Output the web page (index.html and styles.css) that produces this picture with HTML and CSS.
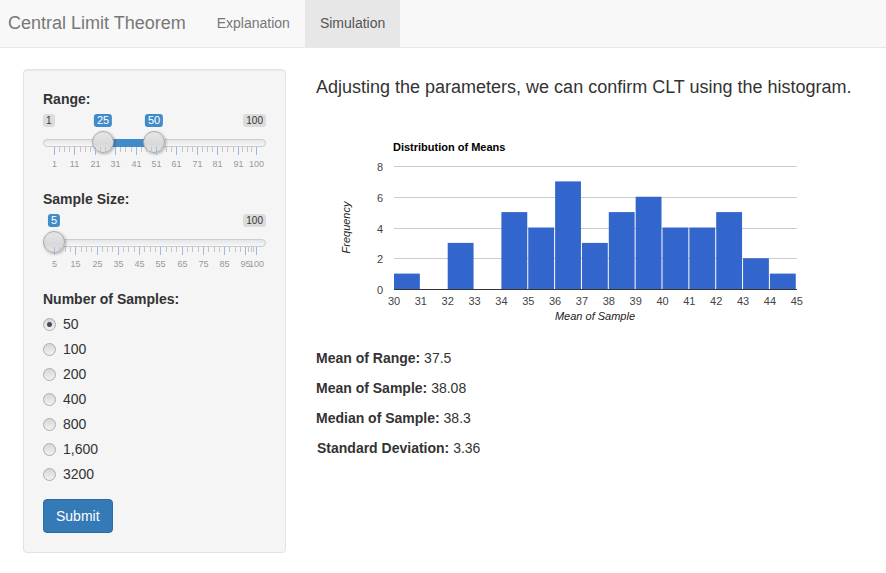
FILE: index.html
```html
<!DOCTYPE html>
<html lang="en">
<head>
<meta charset="utf-8">
<title>Central Limit Theorem</title>
<link rel="stylesheet" href="styles.css">
</head>
<body>
<nav class="navbar">
  <span class="brand">Central Limit Theorem</span>
  <ul class="nav">
    <li><a>Explanation</a></li>
    <li class="active"><a>Simulation</a></li>
  </ul>
</nav>
<div class="content">
  <aside class="well">
    <div class="form-group">
      <label class="control-label">Range:</label>
      <div class="irs">
        <span class="irs-line"></span>
        <span class="irs-bar" style="left:60px;width:51px"></span>
        <span class="irs-min">1</span>
        <span class="irs-max">100</span>
        <span class="irs-val" style="left:60px">25</span>
        <span class="irs-val" style="left:111px">50</span>
        <span class="irs-handle" style="left:60px"></span>
        <span class="irs-handle" style="left:111px"></span>
        <svg class="irs-grid" width="223" height="24" viewBox="0 0 223 24">
          <path class="pol-big" d="M11.5 0v8M31.5 0v8M52.5 0v8M72.5 0v8M93.5 0v8M113.5 0v8M133.5 0v8M154.5 0v8M174.5 0v8M195.5 0v8M213.5 0v8"/>
          <path class="pol-small" d="M16.5 0v5M21.5 0v5M26.5 0v5M37.5 0v5M42.5 0v5M47.5 0v5M57.5 0v5M62.5 0v5M67.5 0v5M77.5 0v5M82.5 0v5M88.5 0v5M98.5 0v5M103.5 0v5M108.5 0v5M118.5 0v5M123.5 0v5M128.5 0v5M139.5 0v5M144.5 0v5M149.5 0v5M159.5 0v5M164.5 0v5M169.5 0v5M179.5 0v5M184.5 0v5M190.5 0v5M199.5 0v5M204.5 0v5M208.5 0v5"/>
          <text x="11.5" y="20">1</text>
          <text x="31.5" y="20">11</text>
          <text x="52.5" y="20">21</text>
          <text x="72.5" y="20">31</text>
          <text x="93.5" y="20">41</text>
          <text x="113.5" y="20">51</text>
          <text x="133.5" y="20">61</text>
          <text x="154.5" y="20">71</text>
          <text x="174.5" y="20">81</text>
          <text x="195.5" y="20">91</text>
          <text x="213.5" y="20">100</text>
        </svg>
      </div>
    </div>
    <div class="form-group">
      <label class="control-label">Sample Size:</label>
      <div class="irs">
        <span class="irs-line"></span>
        <span class="irs-min irs-hidden">5</span>
        <span class="irs-max">100</span>
        <span class="irs-val" style="left:11px">5</span>
        <span class="irs-handle" style="left:11px"></span>
        <svg class="irs-grid" width="223" height="24" viewBox="0 0 223 24">
          <path class="pol-big" d="M11.5 0v8M32.5 0v8M54.5 0v8M75.5 0v8M96.5 0v8M117.5 0v8M139.5 0v8M160.5 0v8M181.5 0v8M202.5 0v8M213.5 0v8"/>
          <path class="pol-small" d="M16.5 0v5M22.5 0v5M27.5 0v5M38.5 0v5M43.5 0v5M48.5 0v5M59.5 0v5M64.5 0v5M69.5 0v5M80.5 0v5M85.5 0v5M91.5 0v5M101.5 0v5M107.5 0v5M112.5 0v5M123.5 0v5M128.5 0v5M133.5 0v5M144.5 0v5M149.5 0v5M155.5 0v5M165.5 0v5M171.5 0v5M176.5 0v5M186.5 0v5M192.5 0v5M197.5 0v5M205.5 0v5M208.5 0v5M210.5 0v5"/>
          <text x="11.5" y="20">5</text>
          <text x="32.5" y="20">15</text>
          <text x="54.5" y="20">25</text>
          <text x="75.5" y="20">35</text>
          <text x="96.5" y="20">45</text>
          <text x="117.5" y="20">55</text>
          <text x="139.5" y="20">65</text>
          <text x="160.5" y="20">75</text>
          <text x="181.5" y="20">85</text>
          <text x="202.5" y="20">95</text>
          <text x="213.5" y="20">100</text>
        </svg>
      </div>
    </div>
    <div class="form-group">
      <label class="control-label">Number of Samples:</label>
      <div class="radio-group">
        <label class="radio"><input type="radio" name="n" checked><span>50</span></label>
        <label class="radio"><input type="radio" name="n"><span>100</span></label>
        <label class="radio"><input type="radio" name="n"><span>200</span></label>
        <label class="radio"><input type="radio" name="n"><span>400</span></label>
        <label class="radio"><input type="radio" name="n"><span>800</span></label>
        <label class="radio"><input type="radio" name="n"><span>1,600</span></label>
        <label class="radio"><input type="radio" name="n"><span>3200</span></label>
      </div>
    </div>
    <button class="btn" type="button">Submit</button>
  </aside>
  <main class="main">
    <h4 class="lead">Adjusting the parameters, we can confirm CLT using the histogram.</h4>
    <svg class="chart" width="520" height="200" viewBox="0 0 520 200">
      <text class="c-title" x="77" y="23">Distribution of Means</text>
      <path class="gridline" d="M78 38.5H481M78 69.5H481M78 100.5H481M78 130.5H481"/>
      <g class="bars">
        <rect x="78" y="145.6" width="25.85" height="15.4"/>
        <rect x="131.7" y="114.9" width="25.85" height="46.1"/>
        <rect x="185.4" y="84.1" width="25.85" height="76.9"/>
        <rect x="212.25" y="99.5" width="25.85" height="61.5"/>
        <rect x="239.1" y="53.4" width="25.85" height="107.6"/>
        <rect x="265.95" y="114.9" width="25.85" height="46.1"/>
        <rect x="292.8" y="84.1" width="25.85" height="76.9"/>
        <rect x="319.65" y="68.75" width="25.85" height="92.25"/>
        <rect x="346.5" y="99.5" width="25.85" height="61.5"/>
        <rect x="373.35" y="99.5" width="25.85" height="61.5"/>
        <rect x="400.2" y="84.1" width="25.85" height="76.9"/>
        <rect x="427.05" y="130.25" width="25.85" height="30.75"/>
        <rect x="453.9" y="145.6" width="25.85" height="15.4"/>
      </g>
      <path class="baseline" d="M78 161.5H481"/>
      <g class="ylab">
        <text x="67" y="42.5">8</text>
        <text x="67" y="73.5">6</text>
        <text x="67" y="104.5">4</text>
        <text x="67" y="134.5">2</text>
        <text x="67" y="165.5">0</text>
      </g>
      <g class="xlab">
        <text x="78" y="177">30</text>
        <text x="104.85" y="177">31</text>
        <text x="131.7" y="177">32</text>
        <text x="158.55" y="177">33</text>
        <text x="185.4" y="177">34</text>
        <text x="212.25" y="177">35</text>
        <text x="239.1" y="177">36</text>
        <text x="265.95" y="177">37</text>
        <text x="292.8" y="177">38</text>
        <text x="319.65" y="177">39</text>
        <text x="346.5" y="177">40</text>
        <text x="373.35" y="177">41</text>
        <text x="400.2" y="177">42</text>
        <text x="427.05" y="177">43</text>
        <text x="453.9" y="177">44</text>
        <text x="480.75" y="177">45</text>
      </g>
      <text class="axis-title" transform="translate(34 99.5) rotate(-90)">Frequency</text>
      <text class="axis-title" x="279" y="191.5">Mean of Sample</text>
    </svg>
    <div class="stats">
      <p><strong>Mean of Range:</strong> 37.5</p>
      <p><strong>Mean of Sample:</strong> 38.08</p>
      <p><strong>Median of Sample:</strong> 38.3</p>
      <p class="indent"><strong>Standard Deviation:</strong> 3.36</p>
    </div>
  </main>
</div>
</body>
</html>
```

FILE: styles.css
```css
* { box-sizing: border-box; }

html, body { margin: 0; padding: 0; }

body {
  font-family: "Liberation Sans", Arial, Helvetica, sans-serif;
  font-size: 14px;
  line-height: 20px;
  color: #333;
  background: #fff;
}

/* Navbar */
.navbar {
  display: flex;
  height: 48px;
  background: #f8f8f8;
  border-bottom: 1px solid #e7e7e7;
}
.brand {
  padding: 0 16px 0 8px;
  font-size: 18px;
  line-height: 47px;
  color: #777;
}
.nav {
  display: flex;
  margin: 0;
  padding: 0;
  list-style: none;
}
.nav a {
  display: block;
  padding: 0 15px;
  line-height: 47px;
  color: #777;
}
.nav .active a {
  background: #e7e7e7;
  color: #555;
}

/* Layout */
.content {
  display: flex;
  align-items: flex-start;
  padding: 21px 0 0 23px;
}
.well {
  width: 263px;
  flex: none;
  padding: 19px;
  background: #f5f5f5;
  border: 1px solid #e3e3e3;
  border-radius: 4px;
  box-shadow: inset 0 1px 1px rgba(0, 0, 0, .05);
}
.main {
  margin-left: 30px;
  padding-top: 9px;
}

/* Form */
.form-group { margin-bottom: 15px; }
.control-label {
  display: block;
  font-weight: bold;
  margin-bottom: 5px;
}

/* Slider */
.irs {
  position: relative;
  height: 60px;
}
.irs-line {
  position: absolute;
  left: 0;
  right: 0;
  top: 25px;
  height: 8px;
  border: 1px solid #ccc;
  border-radius: 16px;
  background: linear-gradient(#ddd -50%, #fff 150%);
}
.irs-bar {
  position: absolute;
  top: 25px;
  height: 8px;
  background: #428bca;
}
.irs-min, .irs-max {
  position: absolute;
  top: 0;
  padding: 1px 3px;
  font-size: 10px;
  line-height: 11px;
  color: #333;
  background: rgba(0, 0, 0, .1);
  border-radius: 3px;
}
.irs-min { left: 0; }
.irs-max { right: 0; }
.irs-hidden { visibility: hidden; }
.irs-val {
  position: absolute;
  top: 0;
  padding: 1px 3px;
  font-size: 11px;
  line-height: 11px;
  color: #fff;
  background: #428bca;
  border-radius: 3px;
  transform: translateX(-50%);
}
.irs-handle {
  position: absolute;
  top: 17px;
  width: 22px;
  height: 22px;
  margin-left: -11px;
  border: 1px solid #aaa;
  border-radius: 50%;
  background: linear-gradient(#e6e6e6, #d9d9d9 60%, #e4e4e4);
  box-shadow: 1px 1px 3px rgba(0, 0, 0, .3);
}
.irs-grid {
  position: absolute;
  left: 0;
  top: 33px;
  display: block;
}
.irs-grid .pol-big { stroke: #96bde0; stroke-width: 1; }
.irs-grid .pol-small { stroke: #c4c4c4; stroke-width: 1; }
.irs-grid text {
  font-family: "Liberation Sans", Arial, sans-serif;
  font-size: 9px;
  fill: #999;
  text-anchor: middle;
}

/* Radios */
.radio-group {
  display: flex;
  flex-direction: column;
  gap: 5px;
}
.radio {
  display: flex;
  align-items: center;
  height: 20px;
  font-weight: normal;
}
.radio input {
  -webkit-appearance: none;
  appearance: none;
  width: 13px;
  height: 13px;
  margin: 0 7px 0 0;
  border: 1px solid #adadad;
  border-radius: 50%;
  background: linear-gradient(#d6d6d6, #f2f2f2);
}
.radio input:checked {
  background:
    radial-gradient(circle, #4a4a4a 0, #4a4a4a 2px, rgba(74, 74, 74, 0) 3px),
    linear-gradient(#d6d6d6, #f2f2f2);
}

/* Button */
.btn {
  display: inline-block;
  padding: 6px 12px;
  font-family: inherit;
  font-size: 14px;
  line-height: 20px;
  color: #fff;
  background: #337ab7;
  border: 1px solid #2e6da4;
  border-radius: 4px;
}

/* Main */
.lead {
  margin: 0;
  font-size: 18px;
  font-weight: 500;
  line-height: 1.1;
  color: #333;
}
.chart {
  display: block;
  margin-top: 30px;
  font-family: "Liberation Sans", Arial, sans-serif;
}
.chart .c-title { font-size: 11px; font-weight: bold; fill: #000; }
.chart .gridline { stroke: #ccc; stroke-width: 1; fill: none; }
.chart .baseline { stroke: #333; stroke-width: 1; fill: none; }
.chart .bars rect { fill: #3366cc; }
.chart .ylab text { font-size: 11px; fill: #444; text-anchor: end; }
.chart .xlab text { font-size: 11px; fill: #444; text-anchor: middle; }
.chart .axis-title { font-size: 11px; font-style: italic; fill: #222; text-anchor: middle; }

.stats { margin-top: 20px; }
.stats p { margin: 0 0 10px; }
.stats .indent { padding-left: 1px; }
```
